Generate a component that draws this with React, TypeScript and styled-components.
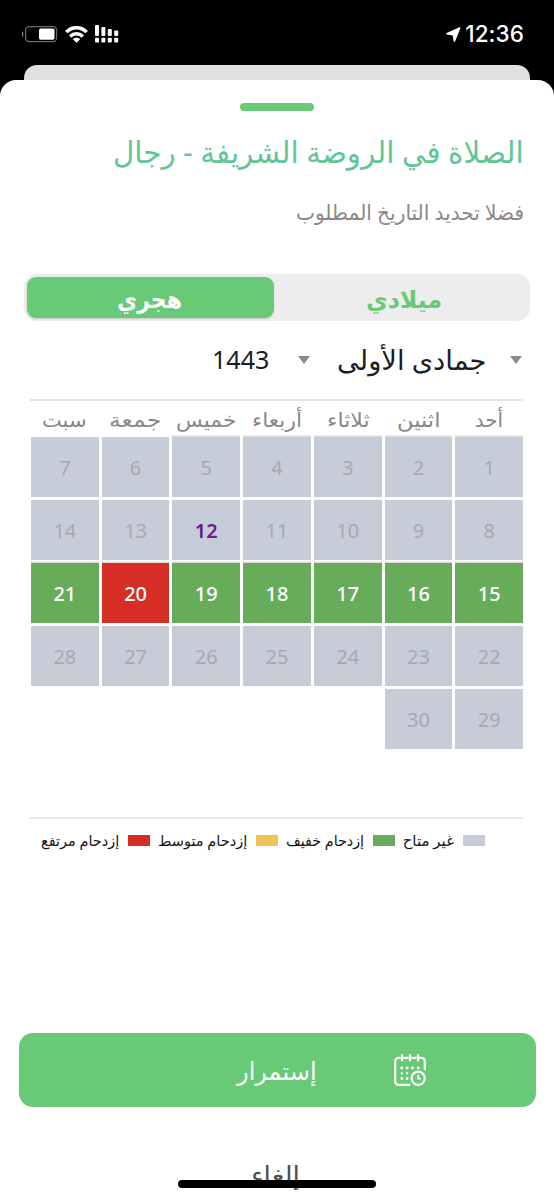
import React, { useLayoutEffect, useRef, useState } from 'react';
import styled, { createGlobalStyle } from 'styled-components';

const GlobalStyle = createGlobalStyle`
  * { box-sizing: border-box; }
  body { margin: 0; background: #000; }
  button { border: 0; padding: 0; background: none; font: inherit; color: inherit; }
`;

const arabic = `"Noto Sans", "DejaVu Sans", sans-serif`;

const Screen = styled.main`
  position: relative;
  width: 554px;
  height: 1200px;
  overflow: hidden;
  display: flex;
  flex-direction: column;
  background: #000;
  font-family: ${arabic};
`;

const StatusBar = styled.header`
  height: 65px;
  padding: 3px 30px 0 21px;
  display: flex;
  align-items: center;
  justify-content: space-between;
  color: #fff;
`;

const StatusGroup = styled.div<{ $gap: number }>`
  display: flex;
  align-items: center;
  gap: ${(p) => p.$gap}px;
`;

const Clock = styled.span`
  font: 500 22.5px/26px Inter, sans-serif;
  letter-spacing: 0.1px;
`;

const BackCard = styled.div`
  height: 15px;
  margin: 0 24px;
  flex: none;
  background: #e0e0e0;
  border-radius: 13px 13px 0 0;
`;

const Sheet = styled.section`
  flex: 1;
  display: flex;
  flex-direction: column;
  background: #fff;
  border-radius: 16px 16px 0 0;
  direction: rtl;
`;

const Handle = styled.div`
  width: 74px;
  height: 8px;
  margin: 23px auto 0;
  border-radius: 4px;
  background: #68c977;
`;

const Heading = styled.div`
  display: flex;
  flex-direction: column;
  padding: 17px 30px 0;
`;

const Title = styled.h1`
  margin: 0;
  height: 48px;
  color: #62c596;
  font-size: 30px;
  line-height: 48px;
  font-weight: 400;
`;

const Subtitle = styled.p`
  margin: 19px 0 0 0;
  height: 34px;
  color: #8b8788;
  font-size: 21px;
  line-height: 34px;
`;

const Tabs = styled.div`
  display: flex;
  height: 47px;
  margin: 45px 24px 0;
  padding: 3px;
  border-radius: 13px;
  background: #ededed;
`;

const Tab = styled.button<{ $active?: boolean }>`
  flex: ${(p) => (p.$active ? '0 0 247px' : '1')};
  height: 41px;
  display: flex;
  justify-content: center;
  padding-left: ${(p) => (p.$active ? 0 : 7)}px;
  padding-right: ${(p) => (p.$active ? 2 : 0)}px;
  border-radius: 9px;
  font-weight: 700;
  font-size: 24px;
  line-height: 43px;
  color: ${(p) => (p.$active ? '#fff' : '#68c977')};
  background: ${(p) => (p.$active ? '#68c977' : 'transparent')};
  box-shadow: ${(p) => (p.$active ? '0 1px 2px rgba(0,0,0,.16)' : 'none')};
`;

const Pickers = styled.div`
  display: flex;
  align-items: center;
  height: 78px;
  padding-right: 32px;
  color: #1c1c26;
`;

const Arrow = styled.span`
  width: 12px;
  height: 8px;
  background: #8a8a8a;
  clip-path: polygon(0 0, 100% 0, 50% 100%);
`;

const MonthName = styled.div`
  margin: 0 24px 0 27px;
  font-size: 27px;
  line-height: 48px;
`;

const Year = styled.div`
  margin-right: 29px;
  font-size: 26px;
  line-height: 48px;
  margin-top: -2px;
`;

const Calendar = styled.div`
  margin: 0 31px 0 30px;
  height: 420px;
  border-top: 2px solid #e4e4e6;
  border-bottom: 2px solid #e9e9e9;
`;

const WeekDays = styled.div`
  display: grid;
  grid-template-columns: repeat(7, 1fr);
  column-gap: 3px;
  padding: 0 0 0 1px;
  height: 36px;
  font-size: 20px;
  line-height: 37px;
  color: #8b8788;
`;

const WeekDay = styled.div`
  display: flex;
  justify-content: center;
`;

const Days = styled.div`
  display: grid;
  grid-template-columns: repeat(7, 1fr);
  grid-auto-rows: 60px;
  gap: 3px;
  padding: 0 0 0 1px;
`;

type Kind = 'off' | 'today' | 'light' | 'high';

const fills: Record<Kind, string> = { off: '#c7ccd9', today: '#c7ccd9', light: '#66ac5b', high: '#d62e24' };
const inks: Record<Kind, string> = { off: '#a9a9ab', today: '#701c82', light: '#fff', high: '#fff' };

const Day = styled.button<{ $kind: Kind; $edge: boolean }>`
  font-size: 20px;
  line-height: 62px;
  font-weight: ${(p) => (p.$kind === 'off' ? 400 : p.$kind === 'today' ? 600 : 500)};
  color: ${(p) => inks[p.$kind]};
  background: ${(p) => fills[p.$kind]};
  box-shadow: ${(p) => (p.$edge ? '0 -1.5px 0 #dcdcdc' : 'none')};
`;

const Legend = styled.div`
  display: flex;
  align-items: center;
  height: 42px;
  padding-right: 69px;
  color: #161616;
  font-size: 15px;
  line-height: 38px;
`;

const LegendItem = styled.div<{ $after: number }>`
  display: flex;
  align-items: center;
  gap: 9px;
  margin-left: ${(p) => p.$after}px;
`;

const Swatch = styled.span<{ $color: string }>`
  width: 22px;
  height: 11px;
  background: ${(p) => p.$color};
`;

const Continue = styled.button`
  display: flex;
  align-items: center;
  height: 74px;
  margin: 172px 18px 0 19px;
  padding-right: 110px;
  gap: 77px;
  border-radius: 14px;
  background: #68c977;
  color: #fff;
  font-size: 25px;
  line-height: 74px;
`;

const Cancel = styled.button`
  display: flex;
  justify-content: center;
  height: 50px;
  margin-top: 42px;
  color: #4f4f4f;
  font-size: 25px;
  line-height: 50px;
`;

const HomeIndicator = styled.div`
  position: absolute;
  left: 178px;
  top: 1180px;
  width: 198px;
  height: 8px;
  border-radius: 4px;
  background: #000;
`;

const FitBox = styled.span<{ $width: number }>`
  display: block;
  flex: none;
  width: ${(p) => p.$width}px;
  white-space: nowrap;
`;

const FitInner = styled.span`
  display: inline-block;
  transform-origin: right center;
`;

/** A single line of text condensed or widened to take exactly the given width. */
function Fit({ width, children }: { width: number; children: string }) {
  const ref = useRef<HTMLSpanElement>(null);
  const [scale, setScale] = useState(1);
  useLayoutEffect(() => {
    if (ref.current) setScale(width / ref.current.offsetWidth);
  }, [width, children]);
  return (
    <FitBox $width={width}>
      <FitInner ref={ref} style={{ transform: `scaleX(${scale})` }}>{children}</FitInner>
    </FitBox>
  );
}

const Battery = () => (
  <svg width="37" height="18" viewBox="0 0 37 18">
    <rect x="4.6" y="1.6" width="31" height="15" rx="3.6" fill="none" stroke="#6b6b6b" strokeWidth="1.2" />
    <path d="M2.2 6.3C.4 7 .4 11.2 2.2 11.9z" fill="#8a8a8a" />
    <rect x="18" y="3.5" width="15.500" height="11.300" rx="1.800" fill="#fff" />
  </svg>
);

const Wifi = () => (
  <svg width="23" height="17" viewBox="0 0 23 17">
    <g fill="none" stroke="#fff" strokeWidth="3.500">
      <path d="M1.300 6.100C7 .2 16 .2 21.700 6.100" />
      <path d="M5.200 10.400C8.800 6.900 14.200 6.900 17.800 10.400" />
    </g>
    <path d="M11.500 16.700L7.900 13.200C9.900 11.300 13.100 11.300 15.100 13.200z" fill="#fff" />
  </svg>
);

const Signal = () => (
  <svg width="24" height="18" viewBox="0 0 24 18" fill="#fff">
    <rect x="0" y="0" width="4" height="11" rx="1" />
    <rect x="6.400" y="2" width="4" height="9" rx="1" />
    <rect x="12.800" y="4" width="4" height="7" rx="1" />
    <rect x="19.200" y="5.500" width="4" height="5.500" rx="1" />
    <rect x="0" y="12.800" width="4" height="4.700" rx="1" />
    <rect x="6.400" y="12.800" width="4" height="4.700" rx="1" />
    <rect x="12.800" y="12.800" width="4" height="4.700" rx="1" />
    <rect x="19.200" y="12.800" width="4" height="4.700" rx="1" />
  </svg>
);

const Location = () => (
  <svg width="15" height="15" viewBox="0 0 15 15">
    <path d="M1 6.700L13.700 1L8.400 13.900L7.500 8.200Q7.400 7.700 6.900 7.600z" fill="#fff" stroke="#fff" strokeWidth="1.600" strokeLinejoin="round" />
  </svg>
);

const CalendarClock = () => (
  <svg width="32" height="32" viewBox="0 0 32 32" fill="none" stroke="#fff" strokeWidth="2.200" strokeLinecap="round">
    <path d="M5.800 3.800H4.800Q1.200 3.800 1.200 7.600V27.200Q1.200 30.800 4.800 30.800H15.500M10 3.800H13.700M18.300 3.800H21.700M26 3.800H27.200Q30.800 3.800 30.800 7.600V15.300" />
    <path d="M8 1.200V6.500M16 1.200V6.500M24 1.200V6.500" />
    <g strokeWidth="2.800">
      <path d="M7.800 14h.1M13.100 14h.1M18.400 14h.1M24.200 14h.1M7.800 24.500h.1M13.100 24.500h.1" />
    </g>
    <g strokeWidth="2.200">
      <path d="M7.800 19.300h.1M13.100 19.300h.1" />
    </g>
    <circle cx="24.200" cy="24.300" r="6.600" />
    <path d="M24.200 21.500V24.600H26.200" strokeWidth="1.800" />
  </svg>
);

const weekDays: [string, number][] = [
  ['أحد', 28], ['اثنين', 43], ['ثلاثاء', 43], ['أربعاء', 50], ['خميس', 60], ['جمعة', 52], ['سبت', 44],
];

const legend: [string, string, number, number][] = [
  ['غير متاح', '#c7ccd9', 51, 8],
  ['إزدحام خفيف', '#66ac5b', 78, 8],
  ['إزدحام متوسط', '#efc45c', 89, 8],
  ['إزدحام مرتفع', '#d62e24', 78, 0],
];

const kindOf = (day: number): Kind =>
  day === 12 ? 'today' : day === 20 ? 'high' : day >= 15 && day <= 21 ? 'light' : 'off';

export default function App() {
  return (
    <Screen>
      <GlobalStyle />
      <StatusBar>
        <StatusGroup $gap={7}>
          <Battery />
          <Wifi />
          <Signal />
        </StatusGroup>
        <StatusGroup $gap={4}>
          <Location />
          <Clock>12:36</Clock>
        </StatusGroup>
      </StatusBar>
      <BackCard />
      <Sheet>
        <Handle />
        <Heading>
          <Title><Fit width={411}>الصلاة في الروضة الشريفة - رجال</Fit></Title>
          <Subtitle><Fit width={228}>فضلا تحديد التاريخ المطلوب</Fit></Subtitle>
        </Heading>
        <Tabs>
          <Tab><Fit width={76}>ميلادي</Fit></Tab>
          <Tab $active><Fit width={65}>هجري</Fit></Tab>
        </Tabs>
        <Pickers>
          <Arrow />
          <MonthName><Fit width={149}>جمادى الأولى</Fit></MonthName>
          <Arrow />
          <Year><Fit width={58}>1443</Fit></Year>
        </Pickers>
        <Calendar>
          <WeekDays>
            {weekDays.map(([name, width]) => (
              <WeekDay key={name}><Fit width={width}>{name}</Fit></WeekDay>
            ))}
          </WeekDays>
          <Days>
            {Array.from({ length: 30 }, (_, i) => i + 1).map((day) => (
              <Day key={day} $kind={kindOf(day)} $edge={day <= 5 || (day >= 15 && day <= 21)}>{day}</Day>
            ))}
          </Days>
        </Calendar>
        <Legend>
          {legend.map(([name, color, width, after]) => (
            <LegendItem key={name} $after={after}>
              <Swatch $color={color} />
              <Fit width={width}>{name}</Fit>
            </LegendItem>
          ))}
        </Legend>
        <Continue>
          <CalendarClock />
          <Fit width={80}>إستمرار</Fit>
        </Continue>
        <Cancel><Fit width={49}>إلغاء</Fit></Cancel>
      </Sheet>
      <HomeIndicator />
    </Screen>
  );
}
